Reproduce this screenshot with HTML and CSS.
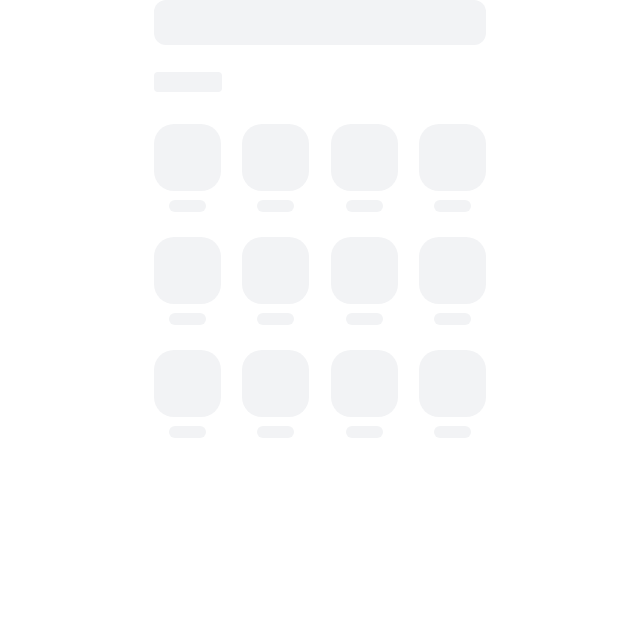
FILE: index.html
```html
<!DOCTYPE html>
<html lang="en">
<head>
<meta charset="utf-8">
<title>Loading</title>
<link rel="stylesheet" href="styles.css">
</head>
<body>
<main class="page">
  <div class="sk sk-search"></div>
  <div class="sk sk-title"></div>
  <div class="grid">
    <div class="item"><div class="sk tile"></div><div class="sk label"></div></div>
    <div class="item"><div class="sk tile"></div><div class="sk label"></div></div>
    <div class="item"><div class="sk tile"></div><div class="sk label"></div></div>
    <div class="item"><div class="sk tile"></div><div class="sk label"></div></div>
    <div class="item"><div class="sk tile"></div><div class="sk label"></div></div>
    <div class="item"><div class="sk tile"></div><div class="sk label"></div></div>
    <div class="item"><div class="sk tile"></div><div class="sk label"></div></div>
    <div class="item"><div class="sk tile"></div><div class="sk label"></div></div>
    <div class="item"><div class="sk tile"></div><div class="sk label"></div></div>
    <div class="item"><div class="sk tile"></div><div class="sk label"></div></div>
    <div class="item"><div class="sk tile"></div><div class="sk label"></div></div>
    <div class="item"><div class="sk tile"></div><div class="sk label"></div></div>
  </div>
</main>
</body>
</html>
```
FILE: styles.css
```css
html, body {
  margin: 0;
  padding: 0;
  background: #ffffff;
  font-family: "Liberation Sans", Arial, sans-serif;
}
.page {
  width: 332px;
  margin: 0 auto;
  display: flex;
  flex-direction: column;
}
.sk {
  background: #f2f3f5;
}
.sk-search {
  height: 45px;
  border-radius: 12px;
}
.sk-title {
  margin-top: 27px;
  width: 68px;
  height: 20px;
  border-radius: 4px;
}
.grid {
  margin-top: 32px;
  display: grid;
  grid-template-columns: repeat(4, 67px);
  justify-content: space-between;
  row-gap: 25px;
}
.item {
  display: flex;
  flex-direction: column;
  align-items: center;
  gap: 9px;
}
.tile {
  width: 67px;
  height: 67px;
  border-radius: 20px;
}
.label {
  width: 37px;
  height: 12px;
  border-radius: 6px;
}
```
